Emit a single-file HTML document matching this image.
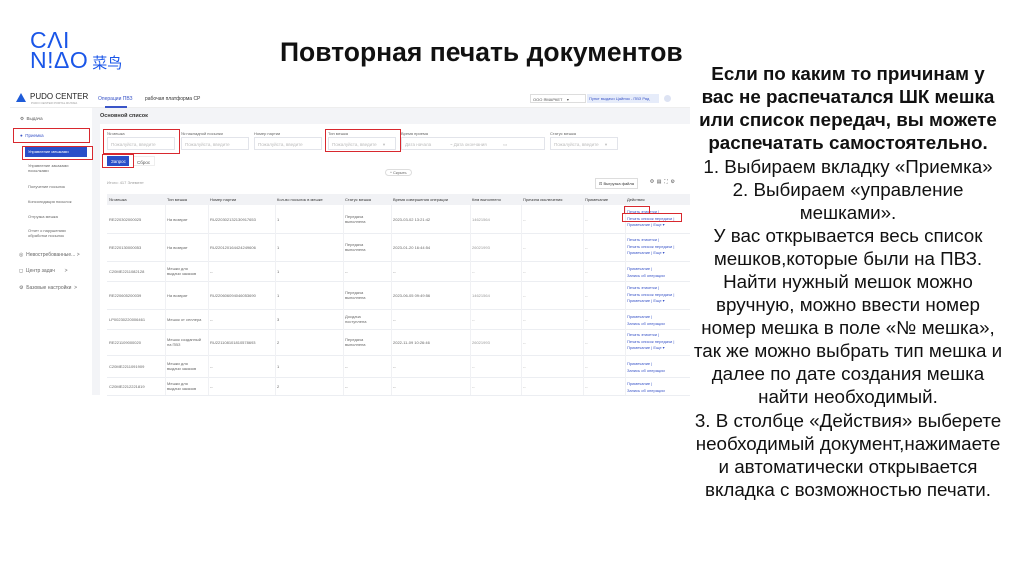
<!DOCTYPE html>
<html><head><meta charset="utf-8"><style>
*{margin:0;padding:0;box-sizing:border-box}
body{width:1024px;height:574px;background:#fff;position:relative;overflow:hidden;font-family:"Liberation Sans",sans-serif}
.a{position:absolute;white-space:nowrap}
.t{font-size:4.5px;color:#666}
.lnk{font-size:4.5px;color:#3a55c8}
.red{position:absolute;border:1.5px solid #d8282e}
.in{position:absolute;border:1px solid #e2e4ea;height:13px;background:#fff;font-size:4.5px;color:#bbb;padding:4px 3px}
.rt{position:absolute;left:678px;width:340px;text-align:center;font-size:18.8px;line-height:23.1px;color:#111;white-space:nowrap}
</style></head><body>
<div class="a" style="left:30px;top:30px;font-size:23px;line-height:20px;color:#1a56e8;letter-spacing:0.5px">C&Lambda;I<br>N!&Delta;O<span style="font-family:'Noto Sans CJK SC',sans-serif;font-size:15px;letter-spacing:0;margin-left:4px">菜鸟</span></div>
<div class="a" style="left:280px;top:37px;font-size:26.5px;font-weight:bold;color:#111">Повторная печать документов</div>

<!-- screenshot -->
<div class="a" style="left:10px;top:88px;width:680px;height:307px;background:#f3f4f7"></div>
<div class="a" style="left:10px;top:88px;width:680px;height:20px;background:#fff;border-bottom:1px solid #eee"></div>
<div class="a" style="left:16px;top:93px;width:0;height:0;border-left:5px solid transparent;border-right:5px solid transparent;border-bottom:9px solid #1e5bd8"></div>
<div class="a" style="left:30px;top:92px;font-size:8px;color:#222">PUDO CENTER</div>
<div class="a" style="left:31px;top:101px;font-size:3px;color:#999">PUDO CENTER PORTAL RUSSIA</div>
<div class="a lnk" style="left:98px;top:96px;font-size:5px">Операции ПВЗ</div>
<div class="a" style="left:105px;top:106px;width:22px;height:1.5px;background:#3a55c8"></div>
<div class="a t" style="left:145px;top:96px;font-size:5px;color:#333">рабочая платформа СР</div>
<div class="a" style="left:530px;top:94px;width:56px;height:9px;border:1px solid #ddd;font-size:4px;color:#555;padding:2px">ООО ЯМАРКЕТ &nbsp; &nbsp;▾</div>
<div class="a" style="left:587px;top:94px;width:72px;height:9px;background:#e6ecfa;font-size:4px;color:#3a55c8;padding:2px">Пункт выдачи Цайняо - ПВЗ Ряд</div>
<div class="a" style="left:664px;top:95px;width:7px;height:7px;border-radius:50%;background:#dde3f3"></div>
<!-- sidebar -->
<div class="a" style="left:10px;top:108px;width:82px;height:287px;background:#fff"></div>
<div class="a t" style="left:20px;top:116px;color:#555">⚙ &nbsp;Выдача</div>
<div class="a lnk" style="left:20px;top:133px">● &nbsp;Приемка</div>
<div class="a" style="left:25px;top:147px;width:62px;height:10px;background:#2a4fc8"></div>
<div class="a" style="left:28px;top:149px;font-size:4px;color:#fff">Управление мешками</div>
<div class="a t" style="left:28px;top:163px;font-size:4px;line-height:5px">Управление заказами<br>посылками</div>
<div class="a t" style="left:28px;top:184px;font-size:4px">Получение посылок</div>
<div class="a t" style="left:28px;top:199px;font-size:4px">Консолидация посылок</div>
<div class="a t" style="left:28px;top:214px;font-size:4px">Отгрузка мешка</div>
<div class="a t" style="left:28px;top:228px;font-size:4px;line-height:5px">Отчет о нарушениях<br>обработки посылок</div>
<div class="a t" style="left:19px;top:252px;font-size:5px">◎ &nbsp;Невостребованные... &gt;</div>
<div class="a t" style="left:19px;top:268px;font-size:5px">◻ &nbsp;Центр задач &nbsp; &nbsp; &nbsp; &gt;</div>
<div class="a t" style="left:19px;top:285px;font-size:5px">⚙ &nbsp;Базовые настройки &nbsp;&gt;</div>
<!-- content -->
<div class="a" style="left:100px;top:113px;font-size:5.5px;color:#333;font-weight:bold">Основной список</div>
<div class="a" style="left:100px;top:124px;width:590px;height:271px;background:#fff"></div>
<div class="a t" style="left:107px;top:131px;font-size:4px">№ мешка</div><div class="in" style="left:107px;top:137px;width:68px">Пожалуйста, введите</div>
<div class="a t" style="left:181px;top:131px;font-size:4px">№ накладной посылки</div><div class="in" style="left:181px;top:137px;width:68px">Пожалуйста, введите</div>
<div class="a t" style="left:254px;top:131px;font-size:4px">Номер партии</div><div class="in" style="left:254px;top:137px;width:68px">Пожалуйста, введите</div>
<div class="a t" style="left:328px;top:131px;font-size:4px">Тип мешка</div><div class="in" style="left:328px;top:137px;width:68px">Пожалуйста, введите &nbsp; &nbsp; ▾</div>
<div class="a t" style="left:401px;top:131px;font-size:4px">Время приема</div><div class="in" style="left:401px;top:137px;width:144px">Дата начала &nbsp; &nbsp; &nbsp; &nbsp; &nbsp; &nbsp; &nbsp; ~ Дата окончания &nbsp; &nbsp; &nbsp; &nbsp; &nbsp; &nbsp; ▭</div>
<div class="a t" style="left:550px;top:131px;font-size:4px">Статус мешка</div><div class="in" style="left:550px;top:137px;width:68px">Пожалуйста, введите &nbsp; &nbsp; ▾</div>
<div class="a" style="left:107px;top:156px;width:22px;height:10px;background:#2a4fc8;font-size:4.5px;color:#fff;padding:2.5px 4px">Запрос</div>
<div class="a" style="left:133px;top:156px;width:22px;height:10px;border:1px solid #eee;font-size:4.5px;color:#555;padding:2.5px 3px">Сброс</div>
<div class="a t" style="left:385px;top:169px;border:1px solid #ddd;border-radius:4px;padding:0 4px;font-size:4px">^ Скрыть</div>
<div class="a t" style="left:107px;top:180px;font-size:4px;color:#999">Итого: 417 Элемент</div>
<div class="a t" style="left:595px;top:178px;border:1px solid #ddd;padding:2px 3px;font-size:4px;color:#333">⊡ Выгрузка файла</div>
<div class="a t" style="left:650px;top:179px;font-size:5px;color:#555">Φ &nbsp;▤ &nbsp;⛶ &nbsp;⚙</div>
<div class="a" style="left:107px;top:194px;width:583px;height:11px;background:#f1f2f5"></div>
<div id="tbl"></div>
<!-- red boxes -->
<div class="red" style="left:13px;top:128px;width:77px;height:15px"></div>
<div class="red" style="left:22px;top:146px;width:71px;height:14px"></div>
<div class="red" style="left:103px;top:129px;width:77px;height:25px"></div>
<div class="red" style="left:102px;top:154px;width:32px;height:14px"></div>
<div class="red" style="left:325px;top:129px;width:76px;height:23px"></div>
<div class="red" style="left:624px;top:206px;width:26px;height:8px"></div>
<div class="red" style="left:622px;top:213px;width:60px;height:9px"></div>

<div class="rt" style="top:62px;font-weight:bold">Если по каким то причинам у<br>вас не распечатался ШК мешка<br>или список передач, вы можете<br>распечатать самостоятельно.</div>
<div class="rt" style="top:154.5px">1. Выбираем вкладку «Приемка»<br>2. Выбираем «управление<br>мешками».<br>У вас открывается весь список<br>мешков,которые были на ПВЗ.<br>Найти нужный мешок можно<br>вручную, можно ввести номер<br>номер мешка в поле «№ мешка»,<br>так же можно выбрать тип мешка и<br>далее по дате создания мешка<br>найти необходимый.<br>3. В столбце «Действия» выберете<br>необходимый документ,нажимаете<br>и автоматически открывается<br>вкладка с возможностью печати.</div>
<script>
var cols=[107,165,208,275,343,391,470,521,583,625];
var hd=["№ мешка","Тип мешка","Номер партии","Кол-во посылок в мешке","Статус мешка","Время совершения операции","Кем выполнено","Причина исключения","Примечание","Действия"];
var rows=[[205,233,"RE220302000025","На возврат","RU220302132130917653","1","Передача<br>выполнена","2023-03-02 13:21:42","14621564",1],
[233,261,"RE220130000053","На возврат","RU220120164424249606","1","Передача<br>выполнена","2023-01-20 16:44:54","26021993",1],
[261,281,"C20ME2211082128","Мешки для<br>выдачи заказов","--","1","--","--","--",0],
[281,309,"RE220605200039","На возврат","RU220606094046053690","1","Передача<br>выполнена","2023-06-05 09:49:56","14621564",1],
[309,329,"LP00230220006461","Мешок от селлера","--","3","Досдача<br>поступлена","--","--",0],
[329,355,"RE221109000020","Мешок созданный<br>на ПВЗ","RU221108101810578693","2","Передача<br>выполнена","2022-11-09 10:26:46","26021993",1],
[355,377,"C20ME2211091909","Мешки для<br>выдачи заказов","--","1","--","--","--",0],
[377,395,"C20ME2212221819","Мешки для<br>выдачи заказов","--","2","--","--","--",0]];
var h="";
for(var i=0;i<10;i++)h+='<div class="a t" style="left:'+(cols[i]+2)+'px;top:197px;font-size:4px;color:#333">'+hd[i]+'</div>';
rows.forEach(function(r){
 var c=(r[0]+r[1])/2;
 h+='<div class="a" style="left:107px;top:'+r[1]+'px;width:583px;height:1px;background:#eceef2"></div>';
 for(var i=1;i<10;i++)h+='<div class="a" style="left:'+cols[i]+'px;top:'+r[0]+'px;width:1px;height:'+(r[1]-r[0])+'px;background:#f0f1f4"></div>';
 var v=[r[2],r[3],r[4],r[5],r[6],r[7],r[8],"--","--"];
 for(var i=0;i<9;i++){var two=v[i].indexOf("<br>")>=0;h+='<div class="a t" style="left:'+(cols[i]+2)+'px;top:'+(c-(two?5:2.5))+'px;font-size:4px;line-height:5px;color:'+(i>=6?'#999':'#666')+'">'+v[i]+'</div>';}
 var act=r[9]?"Печать этикетки |<br>Печать список передачи |<br>Примечание | Еще ▾":"Примечание |<br>Запись об операции";
 h+='<div class="a lnk" style="left:627px;top:'+(c-(r[9]?10:5))+'px;font-size:4px;line-height:6.5px;white-space:nowrap">'+act+'</div>';
});
document.getElementById("tbl").innerHTML=h;
</script>
</body></html>
